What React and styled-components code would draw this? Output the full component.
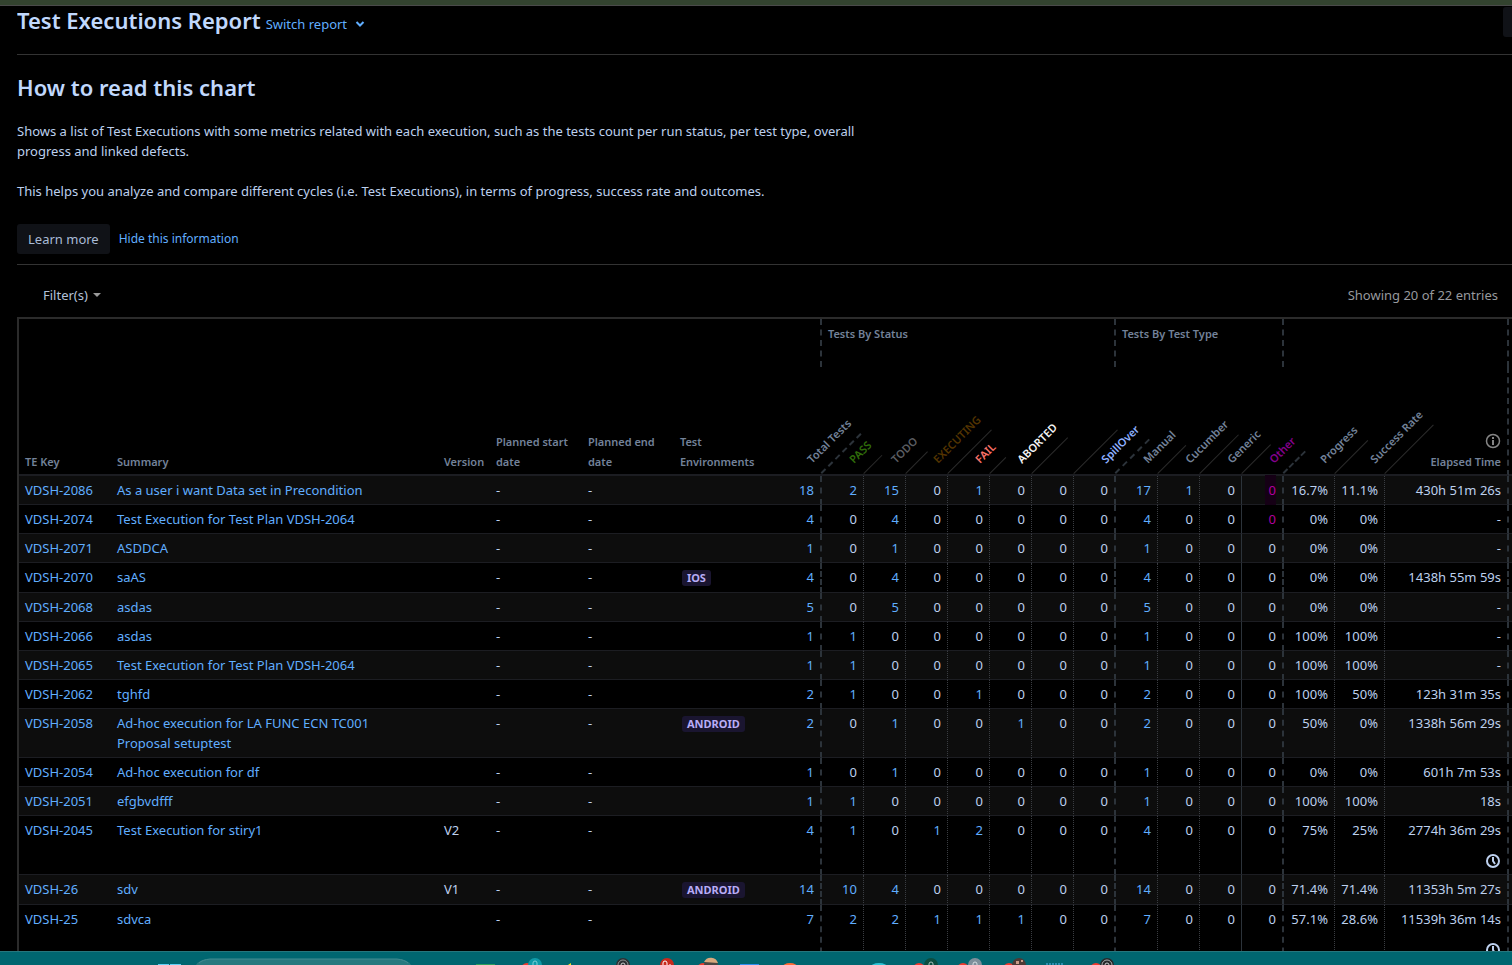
import React from 'react'
import styled, { createGlobalStyle, css } from 'styled-components'

const statuses = [
  { name: 'PASS', color: '#2f6b0a' },
  { name: 'TODO', color: '#5b5d62' },
  { name: 'EXECUTING', color: '#533400' },
  { name: 'FAIL', color: '#f87168' },
  { name: 'ABORTED', color: '#f4f4f4' },
  { name: '', color: '#000' },
  { name: 'SpillOver', color: '#8fb0ff' },
]

const types = ['Manual', 'Cucumber', 'Generic', 'Other']

const rows = [
  { key: 'VDSH-2086', summary: 'As a user i want Data set in Precondition', total: 18, status: [2, 15, 0, 1, 0, 0, 0], type: [17, 1, 0, 0], progress: '16.7%', rate: '11.1%', time: '430h 51m 26s', mark: 'box' },
  { key: 'VDSH-2074', summary: 'Test Execution for Test Plan VDSH-2064', total: 4, status: [0, 4, 0, 0, 0, 0, 0], type: [4, 0, 0, 0], progress: '0%', rate: '0%', time: '-', mark: 'text' },
  { key: 'VDSH-2071', summary: 'ASDDCA', total: 1, status: [0, 1, 0, 0, 0, 0, 0], type: [1, 0, 0, 0], progress: '0%', rate: '0%', time: '-' },
  { key: 'VDSH-2070', summary: 'saAS', env: 'IOS', total: 4, status: [0, 4, 0, 0, 0, 0, 0], type: [4, 0, 0, 0], progress: '0%', rate: '0%', time: '1438h 55m 59s' },
  { key: 'VDSH-2068', summary: 'asdas', total: 5, status: [0, 5, 0, 0, 0, 0, 0], type: [5, 0, 0, 0], progress: '0%', rate: '0%', time: '-' },
  { key: 'VDSH-2066', summary: 'asdas', total: 1, status: [1, 0, 0, 0, 0, 0, 0], type: [1, 0, 0, 0], progress: '100%', rate: '100%', time: '-' },
  { key: 'VDSH-2065', summary: 'Test Execution for Test Plan VDSH-2064', total: 1, status: [1, 0, 0, 0, 0, 0, 0], type: [1, 0, 0, 0], progress: '100%', rate: '100%', time: '-' },
  { key: 'VDSH-2062', summary: 'tghfd', total: 2, status: [1, 0, 0, 1, 0, 0, 0], type: [2, 0, 0, 0], progress: '100%', rate: '50%', time: '123h 31m 35s' },
  { key: 'VDSH-2058', summary: 'Ad-hoc execution for LA FUNC ECN TC001 Proposal setuptest', env: 'ANDROID', total: 2, status: [0, 1, 0, 0, 1, 0, 0], type: [2, 0, 0, 0], progress: '50%', rate: '0%', time: '1338h 56m 29s' },
  { key: 'VDSH-2054', summary: 'Ad-hoc execution for df', total: 1, status: [0, 1, 0, 0, 0, 0, 0], type: [1, 0, 0, 0], progress: '0%', rate: '0%', time: '601h 7m 53s' },
  { key: 'VDSH-2051', summary: 'efgbvdfff', total: 1, status: [1, 0, 0, 0, 0, 0, 0], type: [1, 0, 0, 0], progress: '100%', rate: '100%', time: '18s' },
  { key: 'VDSH-2045', summary: 'Test Execution for stiry1', version: 'V2', total: 4, status: [1, 0, 1, 2, 0, 0, 0], type: [4, 0, 0, 0], progress: '75%', rate: '25%', time: '2774h 36m 29s', running: true },
  { key: 'VDSH-26', summary: 'sdv', version: 'V1', env: 'ANDROID', total: 14, status: [10, 4, 0, 0, 0, 0, 0], type: [14, 0, 0, 0], progress: '71.4%', rate: '71.4%', time: '11353h 5m 27s' },
  { key: 'VDSH-25', summary: 'sdvca', total: 7, status: [2, 2, 1, 1, 1, 0, 0], type: [7, 0, 0, 0], progress: '57.1%', rate: '28.6%', time: '11539h 36m 14s', running: true },
]

const statusEdge = (i) => (i === statuses.length - 1 ? 'dashed' : 'dotted')
const typeEdge = (i) => (i === 3 ? 'dashed' : i === 2 ? 'solid' : 'dotted')

function Count({ value, mark, edge }) {
  return (
    <Td $num $edge={edge}>
      {value > 0 ? <Link href="#tests">{value}</Link> : <Zero $mark={mark}>{value}</Zero>}
    </Td>
  )
}

function TaskBar() {
  return (
    <Bar>
      <svg width="1130" height="13" viewBox="0 0 1130 13" aria-hidden="true">
        <path d="M158 12h11v1h-11zM170 12h11v1h-11z" fill="#5fd0f5" />
        <path d="M196 13a16 7 0 0 1 14-6h187a16 7 0 0 1 14 6z" fill="#27797f" />
        <path d="M199 11a16 7 0 0 1 11-4h187a16 7 0 0 1 11 4" fill="none" stroke="#438b91" />
        <path d="M476 12h19v1h-19z" fill="#2ba05c" />
        <circle cx="527" cy="17" r="6" fill="#ef3b2f" />
        <circle cx="535" cy="13" r="7" fill="#0f9aa8" />
        <path d="M533 13v-2a2 2 0 0 1 4 0v2" fill="none" stroke="#7fd0d8" />
        <path d="M568 13l3-2v2z" fill="#ffe81a" />
        <circle cx="623" cy="13" r="7" fill="#2c3033" />
        <circle cx="623" cy="13" r="5" fill="none" stroke="#8f9394" />
        <circle cx="623" cy="13" r="2" fill="none" stroke="#c9cccd" />
        <circle cx="667" cy="13" r="7" fill="#c92a1e" />
        <path d="M663 13v-2a2 2 0 0 1 4 0v2M670 13v-1" stroke="#fff" fill="none" />
        <circle cx="703" cy="17" r="6" fill="#ef3b2f" />
        <circle cx="711" cy="13" r="7" fill="#4b4642" />
        <path d="M704 10a7.500 7.500 0 0 1 14 1z" fill="#d9a97e" />
        <path d="M740 12h19v1h-19z" fill="#2f8ff0" />
        <ellipse cx="790" cy="16" rx="8" ry="5" fill="#ff6b35" />
        <ellipse cx="879" cy="16" rx="9" ry="5" fill="#2cc4d6" />
        <circle cx="919" cy="17" r="6" fill="#ef3b2f" />
        <circle cx="931" cy="13" r="7" fill="#0b4d40" />
        <path d="M929 13v-1a2 2 0 0 1 4 0v1" fill="none" stroke="#a5c4bd" />
        <circle cx="963" cy="17" r="6" fill="#ef3b2f" />
        <circle cx="975" cy="13" r="7" fill="#7d8f9b" />
        <path d="M973 13v-1a2 2 0 0 1 4 0v1" fill="none" stroke="#d5dde2" />
        <circle cx="1009" cy="17" r="6" fill="#ef3b2f" />
        <circle cx="1019" cy="13" r="7" fill="#4d3a36" />
        <path d="M1016 9h3v3h-3zM1021 8h2v2h-2z" fill="#c99a86" />
        <path d="M1046 12h17" stroke="#58b8f2" strokeDasharray="2 1" />
        <circle cx="1096" cy="17" r="6" fill="#ef3b2f" />
        <circle cx="1107" cy="13" r="7" fill="#26282a" />
        <circle cx="1107" cy="13" r="5" fill="none" stroke="#a9adae" />
        <circle cx="1107" cy="13" r="2" fill="none" stroke="#c9cccd" />
      </svg>
    </Bar>
  )
}

export default function App() {
  return (
    <Page>
      <GlobalStyle />
      <WindowEdge />
      <Main>
        <Header>
          <h1>Test Executions Report</h1>
          <SwitchButton type="button">
            Switch report
            <svg width="10" height="6" viewBox="0 0 10 6" aria-hidden="true">
              <path d="M1.5 1L5 4.5 8.5 1" fill="none" stroke="currentColor" strokeWidth="2" />
            </svg>
          </SwitchButton>
          <MoreButton type="button" aria-label="More options" />
        </Header>

        <Info>
          <h2>How to read this chart</h2>
          <p>
            Shows a list of Test Executions with some metrics related with each execution, such as the tests count per run status, per test type, overall progress and linked defects.
          </p>
          <p>
            This helps you analyze and compare different cycles (i.e. Test Executions), in terms of progress, success rate and outcomes.
          </p>
          <Actions>
            <LearnButton type="button">Learn more</LearnButton>
            <HideLink href="#hide">Hide this information</HideLink>
          </Actions>
        </Info>

        <Toolbar>
          <FilterButton type="button">
            Filter(s)
            <svg width="8" height="4" viewBox="0 0 8 4" aria-hidden="true">
              <path d="M0 0h8L4 4z" fill="#9a9a9a" />
            </svg>
          </FilterButton>
          <span>Showing 20 of 22 entries</span>
        </Toolbar>

        <Table>
          <colgroup>
            <Col $w={92} />
            <Col />
            <Col $w={52} />
            <Col $w={92} />
            <Col $w={92} />
            <Col $w={106} />
            <Col $w={42} />
            {statuses.map((s, i) => <Col key={i} $w={42} />)}
            {types.map((t) => <Col key={t} $w={42} />)}
            <Col $w={51} />
            <Col $w={50} />
            <Col $w={124} />
            <Col $w={3} />
          </colgroup>
          <thead>
            <GroupRow>
              <GroupTh colSpan={7} $edge="dashed" />
              <GroupTh colSpan={7} $edge="dashed">Tests By Status</GroupTh>
              <GroupTh colSpan={4} $edge="dashed">Tests By Test Type</GroupTh>
              <GroupTh colSpan={3} $edge="dashed" />
              <GroupTh />
            </GroupRow>
            <HeadRow>
              <Th>TE Key</Th>
              <Th>Summary</Th>
              <Th>Version</Th>
              <Th>Planned start date</Th>
              <Th>Planned end date</Th>
              <Th>Test Environments</Th>
              <SlantTh><Slant $edge="dashed">Total Tests</Slant></SlantTh>
              {statuses.map((s, i) => (
                <SlantTh key={i}>
                  <Slant $color={s.color} $edge={i === 6 ? 'dashed' : 'solid'}>{s.name}</Slant>
                </SlantTh>
              ))}
              {types.map((t, i) => (
                <SlantTh key={t}>
                  <Slant $color={i === 3 ? '#84008c' : undefined} $edge={i === 3 ? 'dashed' : 'solid'}>{t}</Slant>
                </SlantTh>
              ))}
              <SlantTh><Slant $edge="solid">Progress</Slant></SlantTh>
              <SlantTh><Slant $edge="solid">Success Rate</Slant></SlantTh>
              <Th $num $edge="dashed">
                <InfoIcon width="16" height="16" viewBox="0 0 16 16" aria-hidden="true">
                  <circle cx="8" cy="8" r="6.500" fill="none" stroke="currentColor" strokeWidth="1.5" />
                  <path d="M7 7h2v5H7zM7 4h2v2H7z" fill="currentColor" />
                </InfoIcon>
                Elapsed Time
              </Th>
              <Th />
            </HeadRow>
          </thead>
          <tbody>
            {rows.map((r) => (
              <Row key={r.key}>
                <Td><Link href="#execution">{r.key}</Link></Td>
                <SummaryTd><Link href="#execution">{r.summary}</Link></SummaryTd>
                <Td>{r.version}</Td>
                <Td>-</Td>
                <Td>-</Td>
                <Td>{r.env && <Badge>{r.env}</Badge>}</Td>
                <Count value={r.total} edge="dashed" />
                {r.status.map((n, i) => <Count key={i} value={n} edge={statusEdge(i)} />)}
                {r.type.map((n, i) => (
                  <Count key={i} value={n} edge={typeEdge(i)} mark={i === 3 ? r.mark : undefined} />
                ))}
                <Td $num $edge="dotted">{r.progress}</Td>
                <Td $num $edge="dotted">{r.rate}</Td>
                <Td $num $edge="dashed">
                  {r.time}
                  {r.running && (
                    <Clock>
                      <svg width="16" height="16" viewBox="0 0 16 16" aria-hidden="true">
                        <circle cx="8" cy="8" r="6" fill="none" stroke="currentColor" strokeWidth="2" />
                        <path d="M8 4v4l2 3" fill="none" stroke="currentColor" strokeWidth="2" />
                      </svg>
                    </Clock>
                  )}
                </Td>
                <Td />
              </Row>
            ))}
          </tbody>
        </Table>
      </Main>
      <TaskBar />
    </Page>
  )
}

const GlobalStyle = createGlobalStyle`
  * {
    box-sizing: border-box;
  }
  body {
    margin: 0;
    background: #000;
    color: #bdd0ee;
    font-family: 'Noto Sans', 'Open Sans', sans-serif;
    font-size: 13px;
    line-height: 20px;
  }
  h1, h2, p {
    margin: 0;
  }
  h1, h2 {
    color: #c0d8fd;
    font-size: 22px;
    font-weight: 600;
    line-height: 28px;
  }
  button {
    border: 0;
    padding: 0;
    background: none;
    color: inherit;
    font: inherit;
  }
`

const Page = styled.div`
  display: flex;
  flex-direction: column;
  height: 100vh;
  overflow: hidden;
`

const WindowEdge = styled.div`
  flex: none;
  height: 6px;
  background: #33432f;
  border-bottom: 1px solid #4a4a4a;
`

const Main = styled.main`
  flex: 1;
  min-height: 0;
  overflow: hidden;
  padding-left: 17px;
`

const Header = styled.header`
  display: flex;
  align-items: flex-start;
  height: 49px;
  border-bottom: 1px solid #333;
  overflow: hidden;
`

const SwitchButton = styled.button`
  display: flex;
  align-items: center;
  gap: 8px;
  margin: 8px 0 0 5px;
  color: #60aeff;
`

const MoreButton = styled.button`
  flex: none;
  width: 36px;
  height: 30px;
  margin-top: 1px;
  margin-left: auto;
  margin-right: -27px;
  border-radius: 3px;
  background: #101217;
`

const Info = styled.section`
  padding: 18px 0 10px;
  border-bottom: 1px solid #333;

  p {
    max-width: 860px;
    margin-top: 20px;
  }
`

const Actions = styled.div`
  display: flex;
  align-items: center;
  gap: 9px;
  margin-top: 23px;
`

const LearnButton = styled.button`
  height: 30px;
  padding: 0 11px;
  border-radius: 3px;
  background: #101217;
  color: #a9bbd6;
`

const Toolbar = styled.div`
  display: flex;
  justify-content: space-between;
  align-items: center;
  height: 52px;
  padding: 9px 14px 1px 26px;
  color: #97999d;
`

const FilterButton = styled.button`
  display: flex;
  align-items: center;
  gap: 5px;
  color: #b3c1d8;
`

const Link = styled.a`
  color: #60aeff;
  text-decoration: none;
`

const HideLink = styled(Link)`
  font-size: 12px;
`

const Table = styled.table`
  width: 100%;
  table-layout: fixed;
  border-collapse: separate;
  border-spacing: 0;
  border-top: 2px solid #2b2b2b;
  border-left: 2px solid #2b2b2b;
`

const Col = styled.col`
  width: ${({ $w }) => ($w ? `${$w}px` : 'auto')};
`

const edge = css`
  ${({ $edge }) => $edge === 'dashed' && 'border-right: 2px dashed #2c333a;'}
  ${({ $edge }) => $edge === 'dotted' && 'border-right: 1px dotted #3a3d42;'}
  ${({ $edge }) => $edge === 'solid' && 'border-right: 1px solid #2c333a;'}
`

const GroupRow = styled.tr`
  height: 48px;
`

const GroupTh = styled.th`
  padding: 5px 6px;
  color: #738299;
  font-size: 11px;
  font-weight: 600;
  text-align: left;
  vertical-align: top;
  ${edge}
`

const HeadRow = styled.tr`
  height: 109px;
`

const Th = styled.th`
  padding: 0 6px 2px;
  border-bottom: 2px solid #1c1d22;
  color: #738299;
  font-size: 11px;
  font-weight: 600;
  text-align: ${({ $num }) => ($num ? 'right' : 'left')};
  vertical-align: bottom;
  ${edge}
`

const SlantTh = styled(Th)`
  padding: 0;
  text-align: left;
`

/* header label turned by 45deg, its bottom border carries on the column line */
const Slant = styled.div`
  width: max-content;
  min-width: ${({ children }) => (children ? 0 : '62px')};
  height: 28px;
  margin-left: 100%;
  border-bottom: ${({ $edge }) => ($edge === 'dashed' ? '2px dashed #2c333a' : '1px solid #2b2b2b')};
  color: ${({ $color }) => $color || '#738299'};
  transform: rotate(-45deg);
  transform-origin: 0 100%;
  white-space: nowrap;
`

const InfoIcon = styled.svg`
  display: block;
  margin: 0 0 3px auto;
  color: #858585;
`

const Row = styled.tr`
  &:nth-child(odd) {
    background: #0d0d0d;
  }
`

const Td = styled.td`
  padding: 4px 6px;
  border-bottom: 1px solid #1c1d22;
  text-align: ${({ $num }) => ($num ? 'right' : 'left')};
  vertical-align: top;
  ${edge}

  &:last-child {
    padding: 0;
  }
`

const SummaryTd = styled(Td)`
  padding-right: 40px;
`

const Zero = styled.span`
  ${({ $mark }) => $mark && 'color: #b3009e;'}
  ${({ $mark }) => $mark === 'box' && css`
    padding: 6px 0 6px 4px;
    background: #150015;
  `}
`

const Badge = styled.span`
  display: inline-block;
  margin: 3px 2px 2px;
  padding: 0 5px;
  border-radius: 3px;
  background: #1a1530;
  color: #b8acf6;
  font-size: 11px;
  font-weight: 700;
  line-height: 16px;
  vertical-align: top;
`

const Clock = styled.div`
  display: flex;
  justify-content: flex-end;
  height: 30px;
  padding-top: 13px;
`

const Bar = styled.footer`
  flex: none;
  height: 14px;
  overflow: hidden;
  background: #006670;
  border-top: 1px solid #26767d;

  svg {
    display: block;
  }
`
